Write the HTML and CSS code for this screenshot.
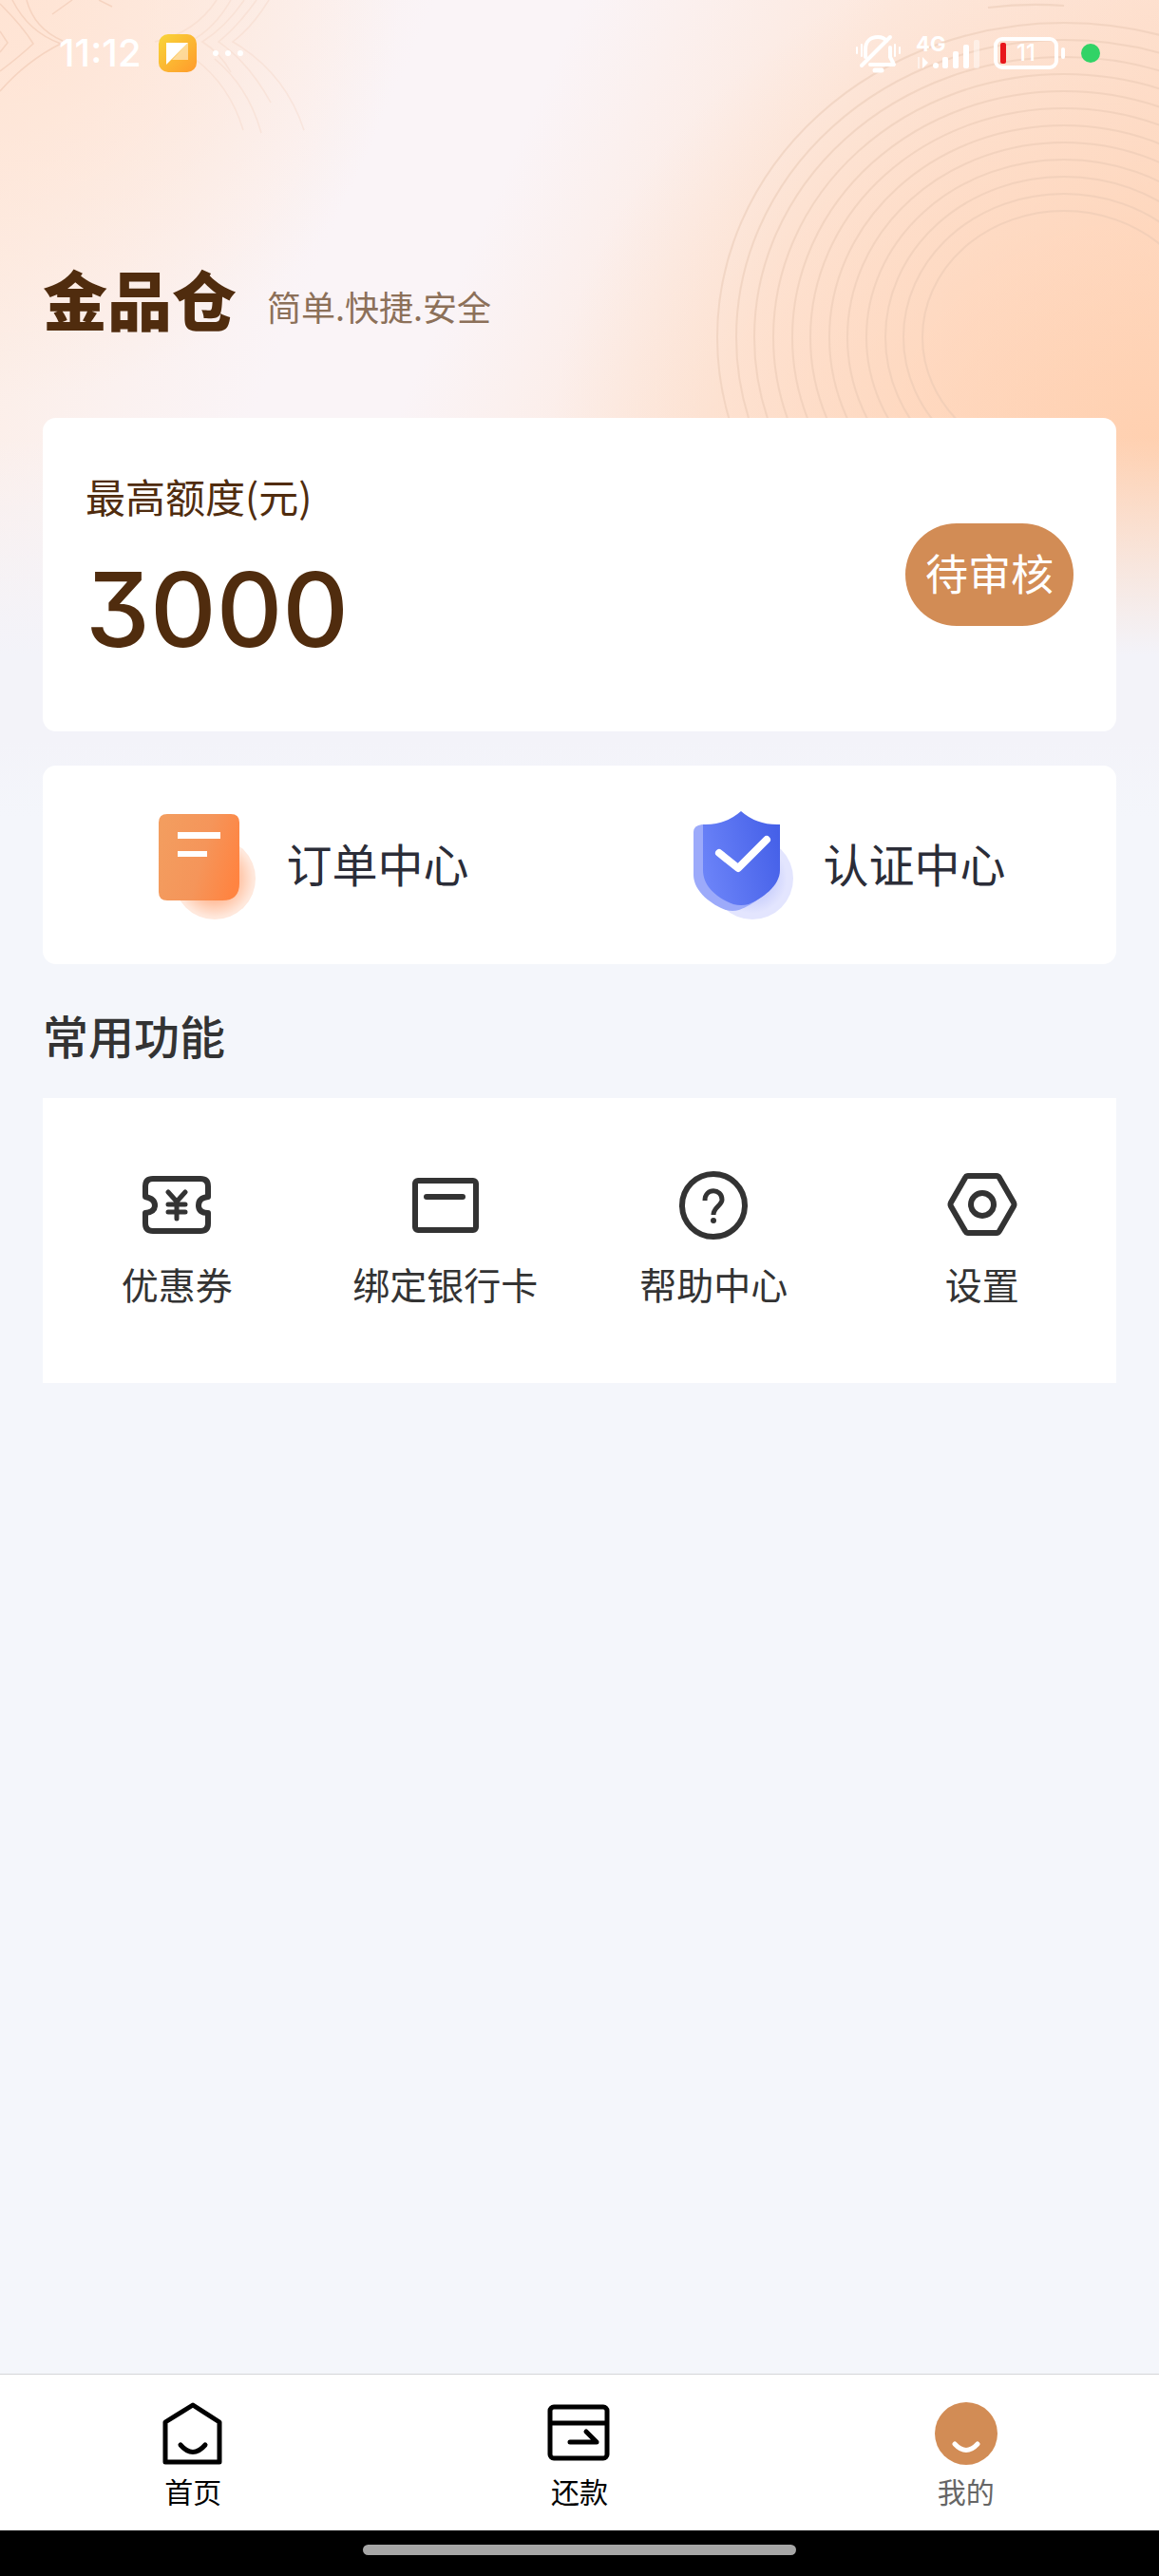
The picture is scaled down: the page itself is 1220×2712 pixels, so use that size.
FILE: index.html
```html
<!DOCTYPE html>
<html lang="zh-CN">
<head>
  <meta charset="UTF-8">
  <meta name="viewport" content="width=device-width, initial-scale=1.0">
  <title>金品仓 - 我的</title>
  <link rel="stylesheet" href="styles.css">
</head>
<body>
<div class="page">

  <!-- decorative rings -->
  <svg class="rings rings-left" viewBox="0 0 360 160" fill="none" stroke="#f3cdb8" stroke-width="1.5" opacity=".7" aria-hidden="true">
    <path d="M0 33L8 45L0 55"/>
    <path d="M0 4Q24 28 35 46Q20 60 0 75"/>
    <path d="M13 0Q30 34 64 46Q28 64 0 96"/>
    <path d="M28 0Q36 30 66 43M55 15L76 0M104 0L118 7"/>
    <g opacity=".4">
      <path d="M228 0Q206 34 163 44M243 0Q226 30 200 44"/>
      <path d="M257 0Q238 28 213 44Q232 56 243 76"/>
      <path d="M270 0Q250 28 230 44Q262 66 285 108"/>
      <path d="M283 0Q266 28 245 44Q300 76 320 137"/>
      <path d="M205 62Q242 90 256 137M226 62Q262 92 275 140"/>
    </g>
  </svg>
  <svg class="rings rings-right" viewBox="0 0 480 440" fill="none" stroke="#e9c9b4" stroke-width="2" opacity=".5" aria-hidden="true">
    <path d="M300 8Q340 3 380 6"/>
    <ellipse cx="380" cy="355" rx="365" ry="331"/>
    <ellipse cx="380" cy="355" rx="345" ry="313"/>
    <ellipse cx="380" cy="355" rx="326" ry="295"/>
    <ellipse cx="380" cy="355" rx="306" ry="277"/>
    <ellipse cx="380" cy="355" rx="286" ry="259"/>
    <ellipse cx="380" cy="355" rx="267" ry="241"/>
    <ellipse cx="380" cy="355" rx="247" ry="223"/>
    <ellipse cx="380" cy="355" rx="228" ry="205"/>
    <ellipse cx="380" cy="355" rx="208" ry="187"/>
    <ellipse cx="380" cy="355" rx="188" ry="169"/>
    <ellipse cx="380" cy="355" rx="169" ry="151"/>
    <ellipse cx="380" cy="355" rx="149" ry="133"/>
  </svg>

  <div class="status">
    <span class="time">11:12</span>
    <svg class="app-icon" viewBox="0 0 40 40" aria-hidden="true">
      <defs>
        <linearGradient id="app" x1="0" y1="0" x2="1" y2="1">
          <stop offset="0" stop-color="#f8d63a"/>
          <stop offset="1" stop-color="#ff9a2b"/>
        </linearGradient>
      </defs>
      <rect width="40" height="40" rx="10" fill="url(#app)"/>
      <path d="M31 9V27H14Z" fill="#fff" opacity=".5"/>
      <path d="M8 9H31L8 32Z" fill="#fff"/>
    </svg>
    <svg class="dots" viewBox="0 0 36 8" fill="#fff" aria-hidden="true"><circle cx="4" cy="4" r="3"/><circle cx="17" cy="4" r="3"/><circle cx="30" cy="4" r="3"/></svg>
    <div class="status-right">
      <svg class="bell" viewBox="0 0 48 42" fill="none" stroke="#fff" stroke-width="4" stroke-linecap="round" stroke-linejoin="round" aria-hidden="true">
        <path d="M11 25V17C11 8 17 4 24 4C28 4 31 5 33 8M37 15V25L41 33H16"/>
        <path d="M7 34L37 4"/>
        <path d="M21 39H28" stroke-width="5"/>
        <path d="M2 15V21M7 12V24M42 12V24M47 15V21" stroke-width="2"/>
      </svg>
      <span class="signal">
        <span class="net">4G</span>
        <svg class="bars" viewBox="0 0 68 36" fill="#fff" aria-hidden="true">
          <path d="M7 22V34L13 28Z"/>
          <path d="M2 22H4V34H2Z" opacity=".5"/>
          <circle cx="21" cy="31" r="3"/>
          <rect x="28" y="22" width="6" height="12" rx="2"/>
          <rect x="39" y="16" width="6" height="18" rx="2"/>
          <rect x="50" y="9" width="6" height="25" rx="2"/>
          <rect x="61" y="4" width="6" height="30" rx="2" opacity=".45"/>
        </svg>
      </span>
      <span class="battery">11</span>
      <span class="live"></span>
    </div>
  </div>

  <header class="brand">
    <h1>金品仓</h1>
    <p>简单.快捷.安全</p>
  </header>

  <main>
    <section class="card quota">
      <div class="quota-text">
        <p class="quota-label">最高额度(元)</p>
        <p class="quota-value">3000</p>
      </div>
      <button class="pill" type="button">待审核</button>
    </section>

    <section class="card centers">
      <a href="#orders">
        <svg viewBox="0 0 120 120" aria-hidden="true">
          <defs>
            <linearGradient id="sheet" x1="0" y1=".3" x2="1" y2=".6">
              <stop offset="0" stop-color="#f39d5f"/>
              <stop offset=".55" stop-color="#f5955a"/>
              <stop offset="1" stop-color="#ff8441"/>
            </linearGradient>
            <radialGradient id="glow">
              <stop offset=".4" stop-color="#ffb28a"/>
              <stop offset=".95" stop-color="#ffe8dc"/>
            </radialGradient>
          </defs>
          <circle cx="65" cy="74" r="43" fill="url(#glow)"/>
          <path d="M15 6H82Q91 6 91 15V79Q91 97 73 97H15Q6 97 6 88V15Q6 6 15 6Z" fill="url(#sheet)"/>
          <path d="M26 25H71V32H26ZM26 45H57V51H26Z" fill="#fff"/>
        </svg>
        <span>订单中心</span>
      </a>
      <a href="#verify">
        <svg viewBox="0 0 120 120" aria-hidden="true">
          <defs>
            <linearGradient id="shield" x1="0" y1=".6" x2="1" y2=".3">
              <stop offset="0" stop-color="#6b83f8"/>
              <stop offset="1" stop-color="#4560e8"/>
            </linearGradient>
            <radialGradient id="haze">
              <stop offset=".4" stop-color="#c6ccfc"/>
              <stop offset=".85" stop-color="#e3e5fe"/>
            </radialGradient>
          </defs>
          <circle cx="66" cy="74" r="43" fill="url(#haze)"/>
          <path d="M13 17Q4 18 4 25V70C4 88 24 102 38 107Q45 109 52 107C70 100 80 90 85 80L60 20Z" fill="#9caafa"/>
          <path d="M54 3Q71 18 95 17V65C95 82 76 95 62 101Q54 103 46 101C32 96 14 84 14 65V17Q37 18 54 3Z" fill="url(#shield)"/>
          <path d="M31 47L51 63L81 33" fill="none" stroke="#fff" stroke-width="8" stroke-linecap="round" stroke-linejoin="round"/>
        </svg>
        <span>认证中心</span>
      </a>
    </section>

    <h2>常用功能</h2>

    <section class="tools">
      <a href="#coupon">
        <svg viewBox="0 0 76 76" aria-hidden="true">
          <path d="M13 10H63Q71 10 71 18V29Q61 30 61 38T71 46V57Q71 65 63 65H13Q5 65 5 57V46Q15 45 15 38T5 29V18Q5 10 13 10Z"/>
          <path d="M29 24L38 34L47 24M38 34V52M29 37H47M29 45H47" stroke-width="5" stroke-linecap="round"/>
        </svg>
        <span>优惠券</span>
      </a>
      <a href="#bank">
        <svg viewBox="0 0 76 76" aria-hidden="true">
          <rect x="6" y="12" width="64" height="52" rx="3"/>
          <path d="M18 29H56" stroke-linecap="round"/>
        </svg>
        <span>绑定银行卡</span>
      </a>
      <a href="#help">
        <svg viewBox="0 0 76 76" aria-hidden="true">
          <circle cx="38" cy="38" r="33"/>
          <path d="M29 33C29 19 47 20 47 32C47 38 38 40 38 48" stroke-width="5"/>
          <circle cx="38" cy="54" r="3" class="fill"/>
        </svg>
        <span>帮助中心</span>
      </a>
      <a href="#settings">
        <svg viewBox="0 0 76 76" aria-hidden="true">
          <path d="M23 7H53Q55 7 56 9L71 35Q72 37 71 39L56 65Q55 67 53 67H23Q21 67 20 65L5 39Q4 37 5 35L20 9Q21 7 23 7Z"/>
          <circle cx="38" cy="37" r="12"/>
        </svg>
        <span>设置</span>
      </a>
    </section>
  </main>

  <nav class="tabs">
    <a href="#home">
      <svg viewBox="0 0 68 68" fill="none" stroke="#000" stroke-width="5" stroke-linejoin="round" aria-hidden="true">
        <path d="M34 4L62 22V64H5V22Z"/>
        <path d="M21 46Q34 61 47 46" stroke-linecap="round"/>
      </svg>
      <span>首页</span>
    </a>
    <a href="#repay">
      <svg viewBox="0 0 68 68" fill="none" stroke="#000" stroke-width="5" stroke-linejoin="round" aria-hidden="true">
        <rect x="3" y="6" width="60" height="54" rx="4"/>
        <path d="M3 23H63"/>
        <path d="M24 43H52L41 32" stroke-linecap="round"/>
      </svg>
      <span>还款</span>
    </a>
    <a href="#mine" class="active" aria-current="page">
      <svg viewBox="0 0 68 68" fill="none" aria-hidden="true">
        <circle cx="34" cy="34" r="33" fill="#d28c55"/>
        <path d="M22 45Q34 58 46 45" stroke="#fff" stroke-width="5" stroke-linecap="round"/>
      </svg>
      <span>我的</span>
    </a>
  </nav>
  <div class="gesture"><span></span></div>

</div>
</body>
</html>
```

FILE: styles.css
```css
* { box-sizing: border-box; }
body { margin: 0; font-family: "Noto Sans CJK SC", sans-serif; color: #333; background: #f4f6fb; }
h1, h2, p { margin: 0; }
a { color: inherit; text-decoration: none; }
svg { display: block; flex: none; }

.page {
  position: relative;
  display: flex;
  flex-direction: column;
  min-height: 100vh;
  background:
    linear-gradient(rgba(243, 243, 249, 0) 460px, #f3f3f9 690px, #f3f3f9 780px, #f4f6fb 860px) no-repeat,
    radial-gradient(640px 560px at 100% 480px, rgba(255, 206, 172, .9), rgba(255, 208, 174, 0)) no-repeat,
    radial-gradient(420px 420px at 0 0, #ffe4d4, rgba(255, 228, 212, 0)) no-repeat,
    linear-gradient(114deg, #fdebe0 0, #faf4f7 420px, #faf4f7 560px, #fde8dd 860px, #fee0cf 1250px) no-repeat;
}

.rings { position: absolute; top: 0; }
.rings-left { left: 0; width: 360px; height: 160px; }
.rings-right { right: 0; width: 480px; height: 440px; }

.status { position: relative; display: flex; align-items: center; height: 112px; padding: 0 62px; color: #fff; }
.time { font: 500 40px/48px Inter, sans-serif; }
.app-icon { width: 40px; height: 40px; margin-left: 18px; }
.dots { width: 36px; height: 8px; margin-left: 16px; }
.status-right { display: flex; align-items: center; margin-left: auto; }
.bell { width: 48px; height: 42px; }
.signal { position: relative; margin-left: 16px; }
.bars { width: 68px; height: 36px; }
.net { position: absolute; left: 0; top: -2px; font: 700 22px/20px Inter, sans-serif; }
.battery {
  position: relative;
  width: 68px;
  height: 34px;
  margin: 0 24px 0 14px;
  border: 4px solid #fff;
  border-radius: 9px;
  font: 500 24px/26px Inter, sans-serif;
  text-align: center;
}
.battery::before { content: ""; position: absolute; left: 3px; top: 2px; width: 6px; height: 22px; border-radius: 2px; background: #e8161b; }
.battery::after { content: ""; position: absolute; right: -11px; top: 7px; width: 4px; height: 12px; border-radius: 2px; background: #fff; }
.live { width: 20px; height: 20px; border-radius: 50%; background: #31d366; }

.brand { position: relative; display: flex; align-items: center; gap: 32px; padding: 154px 45px 78px; }
.brand h1 { font-size: 68px; line-height: 96px; font-weight: 900; color: #502c0e; }
.brand p { padding-top: 16px; font-size: 36px; line-height: 48px; color: #8c7059; }

main { position: relative; flex: 1; padding: 0 45px; }
.card { background: #fff; border-radius: 14px; }
.quota { display: flex; align-items: center; justify-content: space-between; min-height: 330px; padding: 0 45px; color: #502c0e; }
.quota-text { padding-bottom: 18px; }
.quota-label { font-size: 42px; line-height: 56px; }
.quota-value { margin-top: 36px; font: 500 108px/112px Inter, sans-serif; font-feature-settings: "cv09"; }
.pill { height: 108px; padding: 0 21px 4px; border: 0; border-radius: 54px; background: #d28c55; color: #fff; font: 45px/60px "Noto Sans CJK SC", sans-serif; cursor: pointer; }

.centers { display: grid; grid-template-columns: 1fr 1fr; margin-top: 36px; color: #2b2d38; font-size: 48px; }
.centers a { display: flex; align-items: center; justify-content: center; gap: 20px; height: 209px; }
.centers svg { width: 120px; height: 120px; }
.centers span { padding-bottom: 6px; }

h2 { margin: 44px 0 37px; font-size: 48px; line-height: 60px; font-weight: 500; }

.tools { display: grid; grid-template-columns: repeat(4, 1fr); padding: 75px 0; background: #fff; font-size: 39px; line-height: 60px; }
.tools a { display: flex; flex-direction: column; align-items: center; gap: 14px; }
.tools svg { width: 76px; height: 76px; fill: none; stroke: #333; stroke-width: 6; stroke-linejoin: round; }
.tools .fill { fill: #333; stroke: none; }

.tabs { position: relative; display: grid; grid-template-columns: repeat(3, 1fr); border-top: 1px solid #d5d5d8; background: #fff; color: #000; font-size: 30px; line-height: 44px; }
.tabs a { display: flex; flex-direction: column; align-items: center; gap: 4px; padding: 28px 0 20px; }
.tabs svg { width: 68px; height: 68px; }
.tabs .active { color: #666; }

.gesture { display: flex; justify-content: center; padding: 15px 0 22px; background: #000; }
.gesture span { width: 456px; height: 11px; border-radius: 6px; background: #a6a6a6; }
```
